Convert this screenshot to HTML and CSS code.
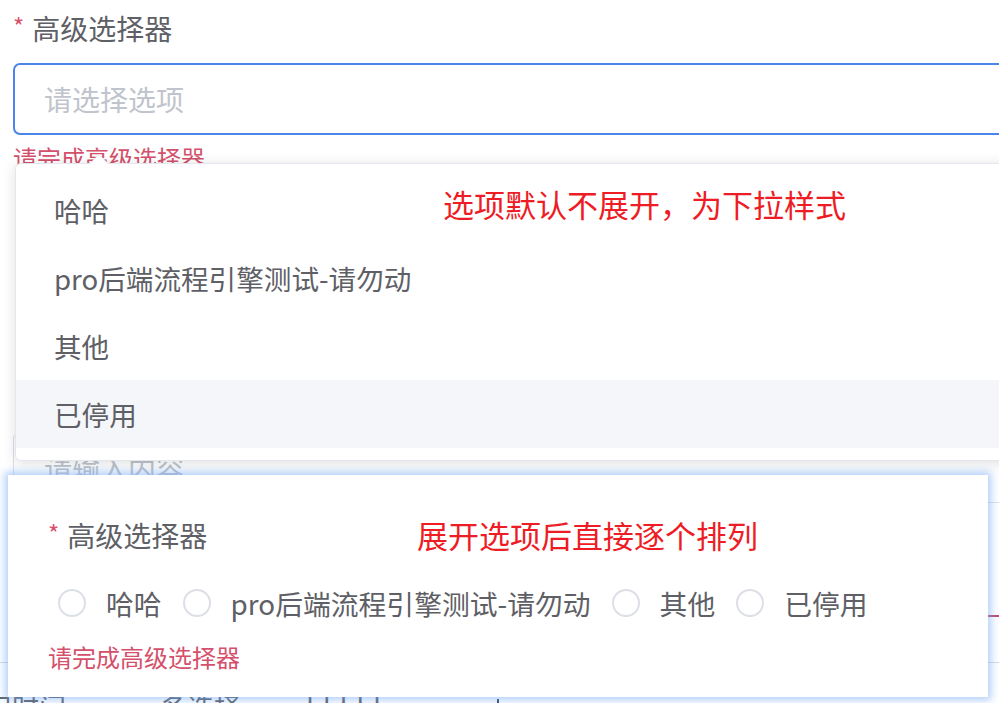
FILE: index.html
```html
<!DOCTYPE html>
<html lang="zh-CN">
<head>
<meta charset="utf-8">
<title>高级选择器</title>
<link rel="stylesheet" href="styles.css">
</head>
<body>
<div class="page">
  <div class="field">
    <div class="label"><span class="star">*</span>高级选择器</div>
    <div class="select-input"><span class="placeholder">请选择选项</span></div>
    <div class="error">请完成高级选择器</div>
  </div>

  <div class="field2">
    <div class="text-input"><span class="placeholder">请输入内容</span></div>
  </div>

  <div class="field3"></div>

  <div class="table-row">
    <span class="cell c1">应用时间</span>
    <span class="cell c2">多选择</span>
    <span class="cell c3">dddddse</span>
    <span class="vline"></span>
  </div>

  <div class="dropdown">
    <span class="arrow"></span>
    <ul class="options">
      <li class="option">哈哈</li>
      <li class="option">pro后端流程引擎测试-请勿动</li>
      <li class="option">其他</li>
      <li class="option hover">已停用</li>
    </ul>
    <div class="note note1">选项默认不展开，为下拉样式</div>
  </div>

  <div class="panel">
    <div class="panel-head">
      <div class="label"><span class="star">*</span>高级选择器</div>
      <div class="note note2">展开选项后直接逐个排列</div>
    </div>
    <div class="radios">
      <label class="radio"><span class="circle"></span><span class="rtext">哈哈</span></label>
      <label class="radio"><span class="circle"></span><span class="rtext">pro后端流程引擎测试-请勿动</span></label>
      <label class="radio"><span class="circle"></span><span class="rtext">其他</span></label>
      <label class="radio"><span class="circle"></span><span class="rtext">已停用</span></label>
    </div>
    <div class="error panel-error">请完成高级选择器</div>
  </div>
</div>
</body>
</html>
```

FILE: styles.css
```css
* { box-sizing: border-box; }

html, body {
  margin: 0;
  padding: 0;
  background: #ffffff;
  overflow: hidden;
}

body {
  width: 999px;
  height: 703px;
  font-family: "Noto Sans CJK SC", "Noto Sans", sans-serif;
  color: #606266;
}

.page {
  position: relative;
  width: 999px;
  height: 703px;
  overflow: hidden;
}

.field {
  padding-left: 13px;
}

.label {
  display: flex;
  align-items: center;
  height: 36px;
  margin-top: 10px;
  font-size: 28px;
  line-height: 36px;
  color: #5e6066;
}

.star {
  color: #d9506a;
  font-size: 24px;
  margin-right: 8px;
  position: relative;
  top: -2px;
}

.select-input {
  margin-top: 17px;
  height: 72px;
  width: 1000px;
  border: 2px solid #4a86ea;
  border-radius: 7px;
  display: flex;
  align-items: center;
  padding-left: 29px;
}

.placeholder {
  font-size: 28px;
  color: #c0c4cc;
}

.error {
  font-size: 24px;
  line-height: 46px;
  height: 46px;
  color: #d4506b;
}

.field2 {
  margin-top: 252px;
  padding-left: 13px;
}

.text-input {
  height: 70px;
  width: 1000px;
  border: 1px solid #dcdfe6;
  border-radius: 6px;
  display: flex;
  align-items: center;
  padding-left: 30px;
}

.field3 {
  margin-top: 112px;
  margin-left: 480px;
  height: 2px;
  background: #c0506a;
}

.table-row {
  margin-top: 45px;
  border-top: 1px solid #d6dbe4;
  height: 60px;
  display: flex;
  align-items: flex-start;
  padding-top: 24px;
  font-size: 27px;
  color: #606266;
  position: relative;
}

.cell { display: block; white-space: nowrap; }
.c1 { margin-left: -42px; width: 202px; }
.c2 { width: 137px; }
.c3 { width: 200px; }
.vline {
  display: block;
  width: 2px;
  height: 40px;
  background: #3a4660;
  margin-top: 12px;
}

/* Dropdown popper overlay */
.dropdown {
  position: absolute;
  left: 15px;
  top: 163px;
  width: 1000px;
  background: #ffffff;
  border: 1px solid #e4e7ed;
  border-radius: 6px;
  box-shadow: 0 2px 14px rgba(0, 0, 0, 0.13);
  padding: 12px 0;
}

.arrow {
  position: absolute;
  left: 74px;
  top: -9px;
  width: 0;
  height: 0;
  border-left: 9px solid transparent;
  border-right: 9px solid transparent;
  border-bottom: 9px solid #ffffff;
  filter: drop-shadow(0 -1px 0 #e4e7ed);
}

.options {
  list-style: none;
  margin: 0;
  padding: 0;
}

.option {
  height: 68px;
  line-height: 68px;
  padding-left: 38px;
  font-size: 27.6px;
  color: #5e6066;
}

.option.hover {
  background: #f5f6fa;
}

.note {
  color: #ee1c25;
  font-size: 31px;
  line-height: 40px;
  white-space: nowrap;
}

.note1 {
  position: absolute;
  left: 427px;
  top: 20px;
}

/* Bottom expanded panel overlay */
.panel {
  position: absolute;
  left: 8px;
  top: 475px;
  width: 980px;
  height: 222px;
  background: #ffffff;
  box-shadow: 0 0 8px 3px rgba(110, 165, 245, 0.55);
  padding: 0 0 0 40px;
}

.panel-head {
  display: flex;
  align-items: center;
  margin-top: 42px;
  height: 36px;
}

.panel-head .label {
  margin-top: 0;
  width: 369px;
}

.radios {
  display: flex;
  align-items: center;
  margin-top: 33px;
  margin-left: 10px;
  height: 34px;
}

.radio {
  display: flex;
  align-items: center;
  margin-right: 21px;
}

.circle {
  width: 28px;
  height: 28px;
  border: 2px solid #dcdfe6;
  border-radius: 50%;
  background: #ffffff;
  margin-right: 20px;
  flex: none;
}

.rtext {
  font-size: 27.8px;
  color: #5e6066;
  white-space: nowrap;
}

.panel-error {
  margin-top: 14px;
}
```
